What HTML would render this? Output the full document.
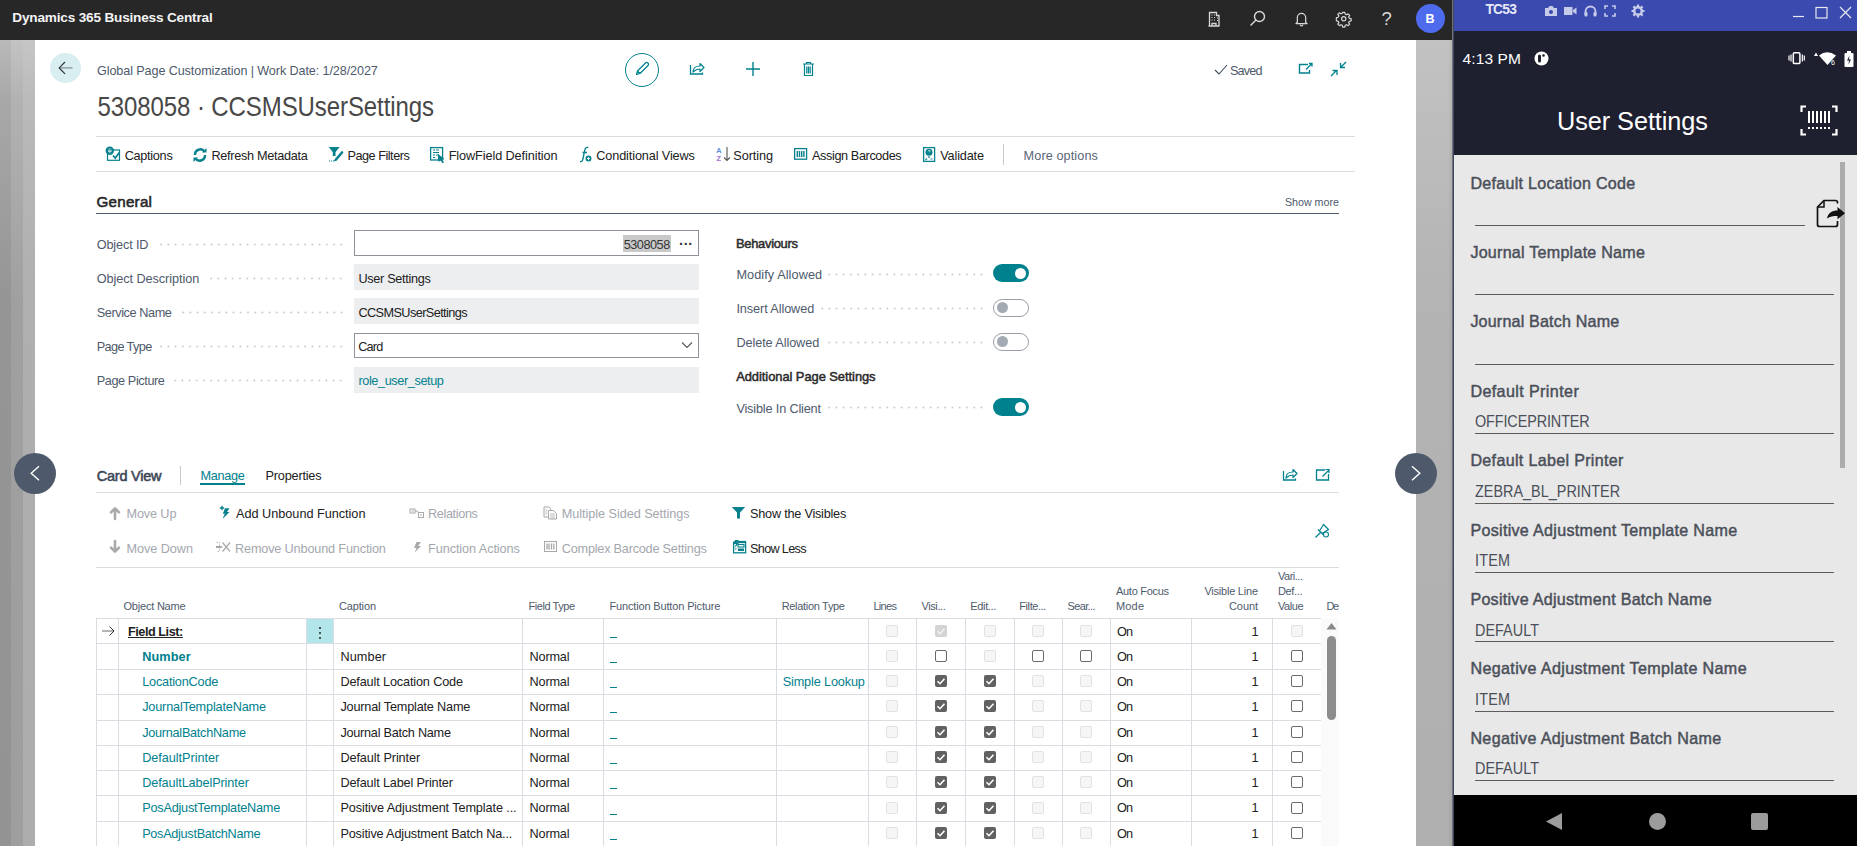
<!DOCTYPE html>
<html><head><meta charset="utf-8">
<style>
*{margin:0;padding:0;box-sizing:border-box}
html,body{width:1857px;height:846px;overflow:hidden;background:#fff;font-family:"Liberation Sans",sans-serif;position:relative}
.a{position:absolute}
.t{position:absolute;white-space:nowrap;line-height:1}
svg.a{overflow:visible}
</style></head><body>
<div class="a" style="left:0px;top:0px;width:1452px;height:40px;background:#272727"></div>
<div class="a" style="left:0px;top:40px;width:11px;height:806px;background:linear-gradient(to bottom,#b9b9b9 0,#a8a8a8 60px,#959595 260px,#939393 100%)"></div>
<div class="a" style="left:11px;top:40px;width:12px;height:806px;background:linear-gradient(to bottom,#c3c3c3 0,#b2b2b2 60px,#a0a0a0 260px,#9e9e9e 100%)"></div>
<div class="a" style="left:23px;top:40px;width:12px;height:806px;background:linear-gradient(to bottom,#c6c6c6 0,#bababa 60px,#afafaf 260px,#adadad 100%)"></div>
<div class="a" style="left:1416px;top:40px;width:36px;height:806px;background:linear-gradient(to bottom,#c2c2c2 0,#b4b4b4 250px,#afafaf 100%)"></div>
<div class="a" style="left:1448px;top:40px;width:4px;height:806px;background:linear-gradient(to right,rgba(0,0,0,0),rgba(0,0,0,.06))"></div>
<div class="t" style="left:12.30px;top:11.09px;font-size:13.6px;color:#f4f4f4;font-weight:bold;letter-spacing:-0.182px;">Dynamics 365 Business Central</div>
<svg class="a" style="left:1207px;top:11px" width="14" height="16" viewBox="0 0 14 16" fill="none"><path d="M2.5 15V1.5h7v3h2.5V15" stroke="#d8d8d8" stroke-width="1.3"/><path d="M4.5 4h1M7 4h1M4.5 6.5h1M7 6.5h1M4.5 9h1M7 9h1M10 7h1M10 9.5h1" stroke="#d8d8d8" stroke-width="1.2"/><path d="M1.5 15h11M5 15v-2.5h4V15" stroke="#d8d8d8" stroke-width="1.3"/></svg>
<svg class="a" style="left:1249px;top:10px" width="17" height="17" viewBox="0 0 17 17" fill="none"><circle cx="10.5" cy="6.5" r="5" stroke="#d8d8d8" stroke-width="1.4"/><path d="M7 10L1.5 15.5" stroke="#d8d8d8" stroke-width="1.5"/></svg>
<svg class="a" style="left:1294.5px;top:11px" width="13" height="15" viewBox="0 0 14 16" fill="none"><path d="M2.5 12V7a4.5 4.5 0 0 1 9 0v5l1.5 1.5H1z" stroke="#d8d8d8" stroke-width="1.3" stroke-linejoin="round"/><path d="M5.5 14.5a1.5 1.5 0 0 0 3 0" stroke="#d8d8d8" stroke-width="1.2"/></svg>
<svg class="a" style="left:1335.5px;top:10.5px" width="15.5" height="15.5" viewBox="0 0 17 17" fill="none"><circle cx="8.5" cy="8.5" r="2.3" stroke="#d8d8d8" stroke-width="1.3"/><path d="M7.3 1.5h2.4l.4 2 1.5.7 1.7-1.1 1.7 1.7-1.1 1.7.7 1.5 2 .4v2.4l-2 .4-.7 1.5 1.1 1.7-1.7 1.7-1.7-1.1-1.5.7-.4 2H7.3l-.4-2-1.5-.7-1.7 1.1-1.7-1.7 1.1-1.7-.7-1.5-2-.4V7.3l2-.4.7-1.5-1.1-1.7 1.7-1.7 1.7 1.1 1.5-.7z" stroke="#d8d8d8" stroke-width="1.3" stroke-linejoin="round"/></svg>
<div class="t" style="left:1381.50px;top:9.94px;font-size:18.5px;color:#d8d8d8;">?</div>
<div class="a" style="left:1416px;top:4px;width:29px;height:29px;background:#4f6bed;border-radius:50%"></div>
<div class="t" style="left:1425.50px;top:13.02px;font-size:12.5px;color:#ffffff;font-weight:bold;">B</div>
<div class="a" style="left:50px;top:52.6px;width:31px;height:30.6px;background:#d8eef1;border-radius:50%"></div>
<svg class="a" style="left:58px;top:61px" width="16" height="14" viewBox="0 0 16 14" fill="none"><path d="M2 6.9h12.5" stroke="#8c9a9a" stroke-width="1.4"/><path d="M7 1L1.2 6.9 7 12.8" stroke="#2f3338" stroke-width="1.2"/></svg>
<div class="t" style="left:97.00px;top:65.13px;font-size:12.6px;color:#4e5a6c;letter-spacing:-0.092px;">Global Page Customization | Work Date: 1/28/2027</div>
<div class="t" style="left:97.50px;top:95.98px;font-size:24px;color:#484848;letter-spacing:-0.090px;transform:scaleY(1.14);transform-origin:0 20.32px;">5308058 · CCSMSUserSettings</div>
<div class="a" style="left:625px;top:53px;width:34px;height:34px;border:1.6px solid #00818e;border-radius:50%"></div>
<svg class="a" style="left:634px;top:61px" width="16" height="16" viewBox="0 0 16 16" fill="none"><path d="M2.5 13.5l1-3.5 8-8a1.4 1.4 0 0 1 2.5 2.5l-8 8z M3.5 10l2.5 2.5" stroke="#00818e" stroke-width="1.2" stroke-linejoin="round"/></svg>
<svg class="a" style="left:689px;top:61px" width="16" height="14" viewBox="0 0 16 14" fill="none"><path d="M1.5 4v9h12v-1.5" stroke="#00818e" stroke-width="1.3"/><path d="M4 11c0-4 3-6 7-6V2.5L15 6.5 11 10.5V8c-3 0-5 1-7 3z" stroke="#00818e" stroke-width="1.2" stroke-linejoin="round"/></svg>
<svg class="a" style="left:745px;top:61px" width="16" height="16" viewBox="0 0 16 16" fill="none"><path d="M8 1v14M1 8h14" stroke="#00818e" stroke-width="1.4"/></svg>
<svg class="a" style="left:802px;top:61px" width="13" height="16" viewBox="0 0 13 16" fill="none"><path d="M1 3h11M4.5 3V1.5h4V3M2.5 3.5v11h8v-11M4.8 5.5v7M6.5 5.5v7M8.2 5.5v7" stroke="#00818e" stroke-width="1.2"/></svg>
<svg class="a" style="left:1214px;top:64px" width="14" height="11" viewBox="0 0 14 11" fill="none"><path d="M1 6l4 4L13 1" stroke="#3f4a5a" stroke-width="1.1"/></svg>
<div class="t" style="left:1230.00px;top:64.93px;font-size:12.6px;color:#4e5a6c;letter-spacing:-0.805px;">Saved</div>
<svg class="a" style="left:1298px;top:62px" width="15" height="13" viewBox="0 0 15 13" fill="none"><path d="M10 2.5H1.5v8.5h10V8" stroke="#00818e" stroke-width="1.4"/><path d="M8 7.5L13.5 2M11 1.5h3v3" stroke="#00818e" stroke-width="1.3"/></svg>
<svg class="a" style="left:1330px;top:61px" width="17" height="16" viewBox="0 0 17 16" fill="none"><path d="M1 15l5.5-5.5M2.5 9.5h4.5v4.5M16 1l-5.5 5.5M10.5 2v4.5H15" stroke="#00818e" stroke-width="1.3"/></svg>
<div class="a" style="left:96px;top:136px;width:1259px;height:1px;background:#d9dbe0"></div>
<div class="a" style="left:96px;top:171px;width:1259px;height:1px;background:#d9dbe0"></div>
<div class="t" style="left:124.70px;top:149.65px;font-size:12.7px;color:#212121;letter-spacing:-0.290px;">Captions</div>
<div class="t" style="left:211.50px;top:149.65px;font-size:12.7px;color:#212121;letter-spacing:-0.298px;">Refresh Metadata</div>
<div class="t" style="left:347.40px;top:149.65px;font-size:12.7px;color:#212121;letter-spacing:-0.478px;">Page Filters</div>
<div class="t" style="left:448.70px;top:149.65px;font-size:12.7px;color:#212121;letter-spacing:-0.096px;">FlowField Definition</div>
<div class="t" style="left:596.30px;top:149.65px;font-size:12.7px;color:#212121;letter-spacing:-0.126px;">Conditional Views</div>
<div class="t" style="left:733.30px;top:149.65px;font-size:12.7px;color:#212121;letter-spacing:-0.072px;">Sorting</div>
<div class="t" style="left:812.00px;top:149.65px;font-size:12.7px;color:#212121;letter-spacing:-0.393px;">Assign Barcodes</div>
<div class="t" style="left:940.20px;top:149.65px;font-size:12.7px;color:#212121;letter-spacing:-0.151px;">Validate</div>
<div class="a" style="left:1003px;top:144px;width:1px;height:21px;background:#c8cbd0"></div>
<div class="t" style="left:1023.60px;top:149.65px;font-size:12.7px;color:#5a6578;letter-spacing:0.089px;">More options</div>
<div class="t" style="left:96.50px;top:193.93px;font-size:15.2px;color:#262626;letter-spacing:0.236px;-webkit-text-stroke:0.55px #262626;">General</div>
<div class="a" style="left:96px;top:213px;width:1243px;height:1px;background:#4f5b6c"></div>
<div class="t" style="left:1284.88px;top:196.54px;font-size:10.7px;color:#4e5a6c;">Show more</div>
<div class="t" style="left:96.70px;top:238.85px;font-size:12.7px;color:#4e5a6c;letter-spacing:-0.129px;">Object ID</div>
<div class="t" style="left:96.70px;top:272.85px;font-size:12.7px;color:#4e5a6c;letter-spacing:-0.068px;">Object Description</div>
<div class="t" style="left:96.70px;top:306.85px;font-size:12.7px;color:#4e5a6c;letter-spacing:-0.405px;">Service Name</div>
<div class="t" style="left:96.70px;top:340.85px;font-size:12.7px;color:#4e5a6c;letter-spacing:-0.611px;">Page Type</div>
<div class="t" style="left:96.70px;top:374.85px;font-size:12.7px;color:#4e5a6c;letter-spacing:-0.402px;">Page Picture</div>
<svg class="a" style="left:159.90px;top:242.90px" width="185.3" height="3"><defs><pattern id="dp1" x="0" y="0" width="7.2" height="3" patternUnits="userSpaceOnUse"><circle cx="1.2" cy="1.5" r="0.95" fill="#c3c7cd"/></pattern></defs><rect width="185.3" height="3" fill="url(#dp1)"/></svg>
<svg class="a" style="left:210.30px;top:276.90px" width="134.9" height="3"><defs><pattern id="dp2" x="0" y="0" width="7.2" height="3" patternUnits="userSpaceOnUse"><circle cx="1.2" cy="1.5" r="0.95" fill="#c3c7cd"/></pattern></defs><rect width="134.9" height="3" fill="url(#dp2)"/></svg>
<svg class="a" style="left:181.50px;top:310.90px" width="163.7" height="3"><defs><pattern id="dp3" x="0" y="0" width="7.2" height="3" patternUnits="userSpaceOnUse"><circle cx="1.2" cy="1.5" r="0.95" fill="#c3c7cd"/></pattern></defs><rect width="163.7" height="3" fill="url(#dp3)"/></svg>
<svg class="a" style="left:159.90px;top:344.90px" width="185.3" height="3"><defs><pattern id="dp4" x="0" y="0" width="7.2" height="3" patternUnits="userSpaceOnUse"><circle cx="1.2" cy="1.5" r="0.95" fill="#c3c7cd"/></pattern></defs><rect width="185.3" height="3" fill="url(#dp4)"/></svg>
<svg class="a" style="left:174.30px;top:378.90px" width="170.9" height="3"><defs><pattern id="dp5" x="0" y="0" width="7.2" height="3" patternUnits="userSpaceOnUse"><circle cx="1.2" cy="1.5" r="0.95" fill="#c3c7cd"/></pattern></defs><rect width="170.9" height="3" fill="url(#dp5)"/></svg>
<div class="a" style="left:354px;top:230px;width:345px;height:26px;border:1px solid #8c919a;background:#fff"></div>
<div class="a" style="left:623px;top:235px;width:48px;height:16.5px;background:#c9c9c9"></div>
<div class="t" style="left:623.70px;top:238.85px;font-size:12.7px;color:#333;letter-spacing:-0.474px;">5308058</div>
<div class="t" style="left:679.00px;top:236.95px;font-size:14px;color:#333;font-weight:bold;">···</div>
<div class="a" style="left:354px;top:264px;width:345px;height:26px;background:#edeef0"></div>
<div class="t" style="left:358.40px;top:272.85px;font-size:12.7px;color:#212121;letter-spacing:-0.302px;">User Settings</div>
<div class="a" style="left:354px;top:298px;width:345px;height:26px;background:#edeef0"></div>
<div class="t" style="left:358.40px;top:306.85px;font-size:12.7px;color:#212121;letter-spacing:-0.579px;">CCSMSUserSettings</div>
<div class="a" style="left:354px;top:333px;width:345px;height:25px;border:1px solid #8c919a;background:#fff"></div>
<div class="t" style="left:358.20px;top:340.85px;font-size:12.7px;color:#212121;letter-spacing:-0.811px;">Card</div>
<svg class="a" style="left:681px;top:341px" width="12" height="8" viewBox="0 0 12 8" fill="none"><path d="M1 1.5l5 5 5-5" stroke="#555" stroke-width="1.1"/></svg>
<div class="a" style="left:354px;top:367px;width:345px;height:26px;background:#edeef0"></div>
<div class="t" style="left:358.40px;top:374.85px;font-size:12.7px;color:#00818e;letter-spacing:-0.391px;">role_user_setup</div>
<div class="t" style="left:736.00px;top:238.18px;font-size:12.9px;color:#2b2b2b;letter-spacing:-0.282px;-webkit-text-stroke:0.5px #2b2b2b;">Behaviours</div>
<div class="t" style="left:736.40px;top:269.35px;font-size:12.7px;color:#4e5a6c;letter-spacing:0.084px;">Modify Allowed</div>
<div class="t" style="left:736.40px;top:303.35px;font-size:12.7px;color:#4e5a6c;letter-spacing:-0.090px;">Insert Allowed</div>
<div class="t" style="left:736.40px;top:337.15px;font-size:12.7px;color:#4e5a6c;letter-spacing:-0.085px;">Delete Allowed</div>
<div class="t" style="left:736.20px;top:370.98px;font-size:12.9px;color:#2b2b2b;letter-spacing:-0.047px;-webkit-text-stroke:0.5px #2b2b2b;">Additional Page Settings</div>
<div class="t" style="left:736.40px;top:402.85px;font-size:12.7px;color:#4e5a6c;letter-spacing:-0.162px;">Visible In Client</div>
<svg class="a" style="left:827.80px;top:272.80px" width="155.4" height="3"><defs><pattern id="dp6" x="0" y="0" width="7.25" height="3" patternUnits="userSpaceOnUse"><circle cx="1.2" cy="1.5" r="0.95" fill="#c3c7cd"/></pattern></defs><rect width="155.4" height="3" fill="url(#dp6)"/></svg>
<svg class="a" style="left:820.55px;top:306.80px" width="162.7" height="3"><defs><pattern id="dp7" x="0" y="0" width="7.25" height="3" patternUnits="userSpaceOnUse"><circle cx="1.2" cy="1.5" r="0.95" fill="#c3c7cd"/></pattern></defs><rect width="162.7" height="3" fill="url(#dp7)"/></svg>
<svg class="a" style="left:827.80px;top:340.60px" width="155.4" height="3"><defs><pattern id="dp8" x="0" y="0" width="7.25" height="3" patternUnits="userSpaceOnUse"><circle cx="1.2" cy="1.5" r="0.95" fill="#c3c7cd"/></pattern></defs><rect width="155.4" height="3" fill="url(#dp8)"/></svg>
<svg class="a" style="left:827.80px;top:406.30px" width="155.4" height="3"><defs><pattern id="dp9" x="0" y="0" width="7.25" height="3" patternUnits="userSpaceOnUse"><circle cx="1.2" cy="1.5" r="0.95" fill="#c3c7cd"/></pattern></defs><rect width="155.4" height="3" fill="url(#dp9)"/></svg>
<div class="a" style="left:993px;top:264px;width:36px;height:18px;background:#00818e;border-radius:9px"></div>
<div class="a" style="left:1015px;top:267.8px;width:11px;height:11px;background:#fff;border-radius:50%"></div>
<div class="a" style="left:993px;top:299px;width:36px;height:18px;background:#fff;border:1px solid #9aa0a8;border-radius:9px"></div>
<div class="a" style="left:997px;top:302.2px;width:11px;height:11px;background:#a4aab4;border-radius:50%"></div>
<div class="a" style="left:993px;top:333px;width:36px;height:18px;background:#fff;border:1px solid #9aa0a8;border-radius:9px"></div>
<div class="a" style="left:997px;top:336.2px;width:11px;height:11px;background:#a4aab4;border-radius:50%"></div>
<div class="a" style="left:993px;top:398px;width:36px;height:18px;background:#00818e;border-radius:9px"></div>
<div class="a" style="left:1015px;top:401.8px;width:11px;height:11px;background:#fff;border-radius:50%"></div>
<div class="a" style="left:14px;top:452.6px;width:42px;height:41.4px;background:#4e5a6c;border-radius:50%"></div>
<svg class="a" style="left:29px;top:465px" width="12" height="16" viewBox="0 0 12 16" fill="none"><path d="M10 1.2L2.2 8.2l7.8 7" stroke="#fff" stroke-width="1.4"/></svg>
<div class="a" style="left:1395px;top:452.6px;width:42px;height:41.4px;background:#4e5a6c;border-radius:50%"></div>
<svg class="a" style="left:1410px;top:465px" width="12" height="16" viewBox="0 0 12 16" fill="none"><path d="M2 1.2l7.8 7L2 15.2" stroke="#fff" stroke-width="1.4"/></svg>
<div class="t" style="left:96.80px;top:468.63px;font-size:14.5px;color:#3d4756;letter-spacing:-0.234px;-webkit-text-stroke:0.55px #3d4756;">Card View</div>
<div class="a" style="left:180px;top:466px;width:1px;height:19px;background:#c8cbd0"></div>
<div class="t" style="left:200.40px;top:469.65px;font-size:12.7px;color:#00818e;letter-spacing:-0.280px;">Manage</div>
<div class="a" style="left:200px;top:482.5px;width:45px;height:2px;background:#00818e"></div>
<div class="t" style="left:265.60px;top:469.65px;font-size:12.7px;color:#212121;letter-spacing:-0.210px;">Properties</div>
<div class="a" style="left:96px;top:492px;width:1243px;height:1px;background:#d9dbe0"></div>
<svg class="a" style="left:1282px;top:467px" width="15" height="14" viewBox="0 0 15 14" fill="none"><path d="M1.5 4v9h12v-1.5" stroke="#00818e" stroke-width="1.3"/><path d="M4 11c0-4 3-6 7-6V2.5L15 6.5 11 10.5V8c-3 0-5 1-7 3z" stroke="#00818e" stroke-width="1.2" stroke-linejoin="round"/></svg>
<svg class="a" style="left:1315px;top:468px" width="15" height="13" viewBox="0 0 15 13" fill="none"><path d="M10 2H1.5v10h12V6" stroke="#00818e" stroke-width="1.3"/><path d="M7.5 8.5L13.5 2.5M10.5 1.5h3.5v3.5" stroke="#00818e" stroke-width="1.2"/></svg>
<div class="t" style="left:126.50px;top:508.15px;font-size:12.7px;color:#a3a7ae;letter-spacing:-0.135px;">Move Up</div>
<div class="t" style="left:236.10px;top:508.15px;font-size:12.7px;color:#212121;letter-spacing:-0.022px;">Add Unbound Function</div>
<div class="t" style="left:428.00px;top:508.15px;font-size:12.7px;color:#a3a7ae;letter-spacing:-0.368px;">Relations</div>
<div class="t" style="left:561.80px;top:508.15px;font-size:12.7px;color:#a3a7ae;letter-spacing:-0.054px;">Multiple Sided Settings</div>
<div class="t" style="left:750.00px;top:508.15px;font-size:12.7px;color:#212121;letter-spacing:-0.226px;">Show the Visibles</div>
<div class="t" style="left:126.50px;top:542.65px;font-size:12.7px;color:#a3a7ae;letter-spacing:-0.069px;">Move Down</div>
<div class="t" style="left:235.00px;top:542.65px;font-size:12.7px;color:#a3a7ae;letter-spacing:-0.164px;">Remove Unbound Function</div>
<div class="t" style="left:428.00px;top:542.65px;font-size:12.7px;color:#a3a7ae;letter-spacing:-0.079px;">Function Actions</div>
<div class="t" style="left:561.80px;top:542.65px;font-size:12.7px;color:#a3a7ae;letter-spacing:-0.224px;">Complex Barcode Settings</div>
<div class="t" style="left:750.00px;top:542.65px;font-size:12.7px;color:#212121;letter-spacing:-0.679px;">Show Less</div>
<div class="a" style="left:96px;top:567px;width:1243px;height:1px;background:#d9dbe0"></div>
<div class="t" style="left:123.50px;top:600.79px;font-size:11px;color:#4e5a6c;letter-spacing:-0.209px;">Object Name</div>
<div class="t" style="left:339.00px;top:600.79px;font-size:11px;color:#4e5a6c;letter-spacing:-0.153px;">Caption</div>
<div class="t" style="left:528.50px;top:600.79px;font-size:11px;color:#4e5a6c;letter-spacing:-0.449px;">Field Type</div>
<div class="t" style="left:609.40px;top:600.79px;font-size:11px;color:#4e5a6c;letter-spacing:-0.148px;">Function Button Picture</div>
<div class="t" style="left:781.70px;top:600.79px;font-size:11px;color:#4e5a6c;letter-spacing:-0.314px;">Relation Type</div>
<div class="t" style="left:873.40px;top:600.79px;font-size:11px;color:#4e5a6c;letter-spacing:-0.675px;">Lines</div>
<div class="t" style="left:921.40px;top:600.79px;font-size:11px;color:#4e5a6c;letter-spacing:-0.383px;">Visi...</div>
<div class="t" style="left:970.30px;top:600.79px;font-size:11px;color:#4e5a6c;letter-spacing:-0.354px;">Edit...</div>
<div class="t" style="left:1019.30px;top:600.79px;font-size:11px;color:#4e5a6c;letter-spacing:-0.422px;">Filte...</div>
<div class="t" style="left:1067.60px;top:600.79px;font-size:11px;color:#4e5a6c;letter-spacing:-0.667px;">Sear...</div>
<div class="t" style="left:1116.00px;top:585.79px;font-size:11px;color:#4e5a6c;letter-spacing:-0.293px;">Auto Focus</div>
<div class="t" style="left:1116.00px;top:600.79px;font-size:11px;color:#4e5a6c;letter-spacing:0.163px;">Mode</div>
<div class="t" style="left:1204.40px;top:585.79px;font-size:11px;color:#4e5a6c;letter-spacing:-0.223px;">Visible Line</div>
<div class="t" style="left:1229.00px;top:600.79px;font-size:11px;color:#4e5a6c;letter-spacing:-0.087px;">Count</div>
<div class="t" style="left:1278.00px;top:570.79px;font-size:11px;color:#4e5a6c;letter-spacing:-0.486px;">Vari...</div>
<div class="t" style="left:1278.00px;top:585.79px;font-size:11px;color:#4e5a6c;letter-spacing:-0.358px;">Def...</div>
<div class="t" style="left:1278.00px;top:600.79px;font-size:11px;color:#4e5a6c;letter-spacing:-0.453px;">Value</div>
<div class="t" style="left:1326.50px;top:600.79px;font-size:11px;color:#4e5a6c;letter-spacing:-1.558px;">De</div>
<div class="a" style="left:96px;top:618px;width:1225px;height:1px;background:#dcdde2"></div>
<div class="a" style="left:96px;top:643px;width:1225px;height:1px;background:#dcdde2"></div>
<div class="a" style="left:96px;top:669px;width:1225px;height:1px;background:#dcdde2"></div>
<div class="a" style="left:96px;top:694px;width:1225px;height:1px;background:#dcdde2"></div>
<div class="a" style="left:96px;top:720px;width:1225px;height:1px;background:#dcdde2"></div>
<div class="a" style="left:96px;top:745px;width:1225px;height:1px;background:#dcdde2"></div>
<div class="a" style="left:96px;top:770px;width:1225px;height:1px;background:#dcdde2"></div>
<div class="a" style="left:96px;top:795px;width:1225px;height:1px;background:#dcdde2"></div>
<div class="a" style="left:96px;top:821px;width:1225px;height:1px;background:#dcdde2"></div>
<div class="a" style="left:96px;top:846px;width:1225px;height:1px;background:#dcdde2"></div>
<div class="a" style="left:96px;top:618px;width:1px;height:228px;background:#dcdde2"></div>
<div class="a" style="left:118px;top:618px;width:1px;height:228px;background:#dcdde2"></div>
<div class="a" style="left:306px;top:618px;width:1px;height:228px;background:#dcdde2"></div>
<div class="a" style="left:333px;top:618px;width:1px;height:228px;background:#dcdde2"></div>
<div class="a" style="left:522px;top:618px;width:1px;height:228px;background:#dcdde2"></div>
<div class="a" style="left:603px;top:618px;width:1px;height:228px;background:#dcdde2"></div>
<div class="a" style="left:776px;top:618px;width:1px;height:228px;background:#dcdde2"></div>
<div class="a" style="left:868px;top:618px;width:1px;height:228px;background:#dcdde2"></div>
<div class="a" style="left:916px;top:618px;width:1px;height:228px;background:#dcdde2"></div>
<div class="a" style="left:965px;top:618px;width:1px;height:228px;background:#dcdde2"></div>
<div class="a" style="left:1014px;top:618px;width:1px;height:228px;background:#dcdde2"></div>
<div class="a" style="left:1062px;top:618px;width:1px;height:228px;background:#dcdde2"></div>
<div class="a" style="left:1110px;top:618px;width:1px;height:228px;background:#dcdde2"></div>
<div class="a" style="left:1191px;top:618px;width:1px;height:228px;background:#dcdde2"></div>
<div class="a" style="left:1272px;top:618px;width:1px;height:228px;background:#dcdde2"></div>
<div class="a" style="left:1321px;top:618px;width:1px;height:228px;background:#dcdde2"></div>
<div class="a" style="left:306.5px;top:619px;width:26.5px;height:24px;background:#b3e6eb"></div>
<div class="a" style="left:319.2px;top:626.5px;width:2px;height:2px;background:#222;border-radius:50%"></div>
<div class="a" style="left:319.2px;top:631.8px;width:2px;height:2px;background:#222;border-radius:50%"></div>
<div class="a" style="left:319.2px;top:637.0px;width:2px;height:2px;background:#222;border-radius:50%"></div>
<svg class="a" style="left:101px;top:625px" width="15" height="12" viewBox="0 0 15 12" fill="none"><path d="M1 6h12" stroke="#777" stroke-width="1.1"/><path d="M8.5 1.5L13 6l-4.5 4.5" stroke="#333" stroke-width="1"/></svg>
<div class="t" style="left:128.00px;top:625.85px;font-size:12.7px;color:#212121;font-weight:bold;letter-spacing:-0.467px;text-decoration:underline;">Field List:</div>
<div class="a" style="left:609.5px;top:637px;width:7px;height:1.3px;background:#00818e"></div>
<div class="a" style="left:886px;top:625px;width:12px;height:12px;background:#f6f6f6;border:1px solid #e2e2e4;border-radius:2px"></div>
<div class="a" style="left:935px;top:625px;width:12px;height:12px;background:#d4d4d4;border-radius:2px"></div>
<svg class="a" style="left:935px;top:625px" width="12" height="12" viewBox="0 0 12 12" fill="none"><path d="M2.5 6.2l2.5 2.5 4.5-5" stroke="#f2f2f2" stroke-width="1.5"/></svg>
<div class="a" style="left:983.5px;top:625px;width:12px;height:12px;background:#f6f6f6;border:1px solid #e2e2e4;border-radius:2px"></div>
<div class="a" style="left:1032px;top:625px;width:12px;height:12px;background:#f6f6f6;border:1px solid #e2e2e4;border-radius:2px"></div>
<div class="a" style="left:1080px;top:625px;width:12px;height:12px;background:#f6f6f6;border:1px solid #e2e2e4;border-radius:2px"></div>
<div class="t" style="left:1117.00px;top:625.85px;font-size:12.7px;color:#212121;letter-spacing:-0.942px;">On</div>
<div class="t" style="left:1251.44px;top:625.85px;font-size:12.7px;color:#212121;">1</div>
<div class="a" style="left:1291px;top:625px;width:12px;height:12px;background:#f6f6f6;border:1px solid #e2e2e4;border-radius:2px"></div>
<div class="t" style="left:142.20px;top:651.06px;font-size:12.7px;color:#00818e;font-weight:bold;letter-spacing:0.104px;">Number</div>
<div class="t" style="left:340.40px;top:651.06px;font-size:12.7px;color:#212121;letter-spacing:0.105px;">Number</div>
<div class="t" style="left:529.50px;top:651.06px;font-size:12.7px;color:#212121;letter-spacing:-0.166px;">Normal</div>
<div class="a" style="left:609.5px;top:662px;width:7px;height:1.3px;background:#00818e"></div>
<div class="a" style="left:886px;top:650px;width:12px;height:12px;background:#f6f6f6;border:1px solid #e2e2e4;border-radius:2px"></div>
<div class="a" style="left:935px;top:650px;width:12px;height:12px;background:#fff;border:1px solid #6b6b6b;border-radius:2px"></div>
<div class="a" style="left:983.5px;top:650px;width:12px;height:12px;background:#f6f6f6;border:1px solid #e2e2e4;border-radius:2px"></div>
<div class="a" style="left:1032px;top:650px;width:12px;height:12px;background:#fff;border:1px solid #6b6b6b;border-radius:2px"></div>
<div class="a" style="left:1080px;top:650px;width:12px;height:12px;background:#fff;border:1px solid #6b6b6b;border-radius:2px"></div>
<div class="t" style="left:1117.00px;top:651.06px;font-size:12.7px;color:#212121;letter-spacing:-0.942px;">On</div>
<div class="t" style="left:1251.44px;top:651.06px;font-size:12.7px;color:#212121;">1</div>
<div class="a" style="left:1291px;top:650px;width:12px;height:12px;background:#fff;border:1px solid #6b6b6b;border-radius:2px"></div>
<div class="t" style="left:142.20px;top:676.27px;font-size:12.7px;color:#00818e;letter-spacing:-0.197px;">LocationCode</div>
<div class="t" style="left:340.40px;top:676.27px;font-size:12.7px;color:#212121;letter-spacing:-0.144px;">Default Location Code</div>
<div class="t" style="left:529.50px;top:676.27px;font-size:12.7px;color:#212121;letter-spacing:-0.166px;">Normal</div>
<div class="a" style="left:609.5px;top:687px;width:7px;height:1.3px;background:#00818e"></div>
<div class="t" style="left:782.70px;top:676.27px;font-size:12.7px;color:#00818e;letter-spacing:-0.143px;">Simple Lookup</div>
<div class="a" style="left:886px;top:675px;width:12px;height:12px;background:#f6f6f6;border:1px solid #e2e2e4;border-radius:2px"></div>
<div class="a" style="left:935px;top:675px;width:12px;height:12px;background:#616161;border-radius:2px"></div>
<svg class="a" style="left:935px;top:675px" width="12" height="12" viewBox="0 0 12 12" fill="none"><path d="M2.5 6.2l2.5 2.5 4.5-5" stroke="#fff" stroke-width="1.6"/></svg>
<div class="a" style="left:983.5px;top:675px;width:12px;height:12px;background:#616161;border-radius:2px"></div>
<svg class="a" style="left:983.5px;top:675px" width="12" height="12" viewBox="0 0 12 12" fill="none"><path d="M2.5 6.2l2.5 2.5 4.5-5" stroke="#fff" stroke-width="1.6"/></svg>
<div class="a" style="left:1032px;top:675px;width:12px;height:12px;background:#f6f6f6;border:1px solid #e2e2e4;border-radius:2px"></div>
<div class="a" style="left:1080px;top:675px;width:12px;height:12px;background:#f6f6f6;border:1px solid #e2e2e4;border-radius:2px"></div>
<div class="t" style="left:1117.00px;top:676.27px;font-size:12.7px;color:#212121;letter-spacing:-0.942px;">On</div>
<div class="t" style="left:1251.44px;top:676.27px;font-size:12.7px;color:#212121;">1</div>
<div class="a" style="left:1291px;top:675px;width:12px;height:12px;background:#fff;border:1px solid #6b6b6b;border-radius:2px"></div>
<div class="t" style="left:142.20px;top:701.48px;font-size:12.7px;color:#00818e;letter-spacing:-0.176px;">JournalTemplateName</div>
<div class="t" style="left:340.40px;top:701.48px;font-size:12.7px;color:#212121;letter-spacing:-0.190px;">Journal Template Name</div>
<div class="t" style="left:529.50px;top:701.48px;font-size:12.7px;color:#212121;letter-spacing:-0.166px;">Normal</div>
<div class="a" style="left:609.5px;top:712px;width:7px;height:1.3px;background:#00818e"></div>
<div class="a" style="left:886px;top:700px;width:12px;height:12px;background:#f6f6f6;border:1px solid #e2e2e4;border-radius:2px"></div>
<div class="a" style="left:935px;top:700px;width:12px;height:12px;background:#616161;border-radius:2px"></div>
<svg class="a" style="left:935px;top:700px" width="12" height="12" viewBox="0 0 12 12" fill="none"><path d="M2.5 6.2l2.5 2.5 4.5-5" stroke="#fff" stroke-width="1.6"/></svg>
<div class="a" style="left:983.5px;top:700px;width:12px;height:12px;background:#616161;border-radius:2px"></div>
<svg class="a" style="left:983.5px;top:700px" width="12" height="12" viewBox="0 0 12 12" fill="none"><path d="M2.5 6.2l2.5 2.5 4.5-5" stroke="#fff" stroke-width="1.6"/></svg>
<div class="a" style="left:1032px;top:700px;width:12px;height:12px;background:#f6f6f6;border:1px solid #e2e2e4;border-radius:2px"></div>
<div class="a" style="left:1080px;top:700px;width:12px;height:12px;background:#f6f6f6;border:1px solid #e2e2e4;border-radius:2px"></div>
<div class="t" style="left:1117.00px;top:701.48px;font-size:12.7px;color:#212121;letter-spacing:-0.942px;">On</div>
<div class="t" style="left:1251.44px;top:701.48px;font-size:12.7px;color:#212121;">1</div>
<div class="a" style="left:1291px;top:700px;width:12px;height:12px;background:#fff;border:1px solid #6b6b6b;border-radius:2px"></div>
<div class="t" style="left:142.20px;top:726.69px;font-size:12.7px;color:#00818e;letter-spacing:-0.273px;">JournalBatchName</div>
<div class="t" style="left:340.40px;top:726.69px;font-size:12.7px;color:#212121;letter-spacing:-0.257px;">Journal Batch Name</div>
<div class="t" style="left:529.50px;top:726.69px;font-size:12.7px;color:#212121;letter-spacing:-0.166px;">Normal</div>
<div class="a" style="left:609.5px;top:738px;width:7px;height:1.3px;background:#00818e"></div>
<div class="a" style="left:886px;top:726px;width:12px;height:12px;background:#f6f6f6;border:1px solid #e2e2e4;border-radius:2px"></div>
<div class="a" style="left:935px;top:726px;width:12px;height:12px;background:#616161;border-radius:2px"></div>
<svg class="a" style="left:935px;top:726px" width="12" height="12" viewBox="0 0 12 12" fill="none"><path d="M2.5 6.2l2.5 2.5 4.5-5" stroke="#fff" stroke-width="1.6"/></svg>
<div class="a" style="left:983.5px;top:726px;width:12px;height:12px;background:#616161;border-radius:2px"></div>
<svg class="a" style="left:983.5px;top:726px" width="12" height="12" viewBox="0 0 12 12" fill="none"><path d="M2.5 6.2l2.5 2.5 4.5-5" stroke="#fff" stroke-width="1.6"/></svg>
<div class="a" style="left:1032px;top:726px;width:12px;height:12px;background:#f6f6f6;border:1px solid #e2e2e4;border-radius:2px"></div>
<div class="a" style="left:1080px;top:726px;width:12px;height:12px;background:#f6f6f6;border:1px solid #e2e2e4;border-radius:2px"></div>
<div class="t" style="left:1117.00px;top:726.69px;font-size:12.7px;color:#212121;letter-spacing:-0.942px;">On</div>
<div class="t" style="left:1251.44px;top:726.69px;font-size:12.7px;color:#212121;">1</div>
<div class="a" style="left:1291px;top:726px;width:12px;height:12px;background:#fff;border:1px solid #6b6b6b;border-radius:2px"></div>
<div class="t" style="left:142.20px;top:751.90px;font-size:12.7px;color:#00818e;letter-spacing:-0.042px;">DefaultPrinter</div>
<div class="t" style="left:340.40px;top:751.90px;font-size:12.7px;color:#212121;letter-spacing:-0.091px;">Default Printer</div>
<div class="t" style="left:529.50px;top:751.90px;font-size:12.7px;color:#212121;letter-spacing:-0.166px;">Normal</div>
<div class="a" style="left:609.5px;top:763px;width:7px;height:1.3px;background:#00818e"></div>
<div class="a" style="left:886px;top:751px;width:12px;height:12px;background:#f6f6f6;border:1px solid #e2e2e4;border-radius:2px"></div>
<div class="a" style="left:935px;top:751px;width:12px;height:12px;background:#616161;border-radius:2px"></div>
<svg class="a" style="left:935px;top:751px" width="12" height="12" viewBox="0 0 12 12" fill="none"><path d="M2.5 6.2l2.5 2.5 4.5-5" stroke="#fff" stroke-width="1.6"/></svg>
<div class="a" style="left:983.5px;top:751px;width:12px;height:12px;background:#616161;border-radius:2px"></div>
<svg class="a" style="left:983.5px;top:751px" width="12" height="12" viewBox="0 0 12 12" fill="none"><path d="M2.5 6.2l2.5 2.5 4.5-5" stroke="#fff" stroke-width="1.6"/></svg>
<div class="a" style="left:1032px;top:751px;width:12px;height:12px;background:#f6f6f6;border:1px solid #e2e2e4;border-radius:2px"></div>
<div class="a" style="left:1080px;top:751px;width:12px;height:12px;background:#f6f6f6;border:1px solid #e2e2e4;border-radius:2px"></div>
<div class="t" style="left:1117.00px;top:751.90px;font-size:12.7px;color:#212121;letter-spacing:-0.942px;">On</div>
<div class="t" style="left:1251.44px;top:751.90px;font-size:12.7px;color:#212121;">1</div>
<div class="a" style="left:1291px;top:751px;width:12px;height:12px;background:#fff;border:1px solid #6b6b6b;border-radius:2px"></div>
<div class="t" style="left:142.20px;top:777.11px;font-size:12.7px;color:#00818e;letter-spacing:-0.107px;">DefaultLabelPrinter</div>
<div class="t" style="left:340.40px;top:777.11px;font-size:12.7px;color:#212121;letter-spacing:-0.154px;">Default Label Printer</div>
<div class="t" style="left:529.50px;top:777.11px;font-size:12.7px;color:#212121;letter-spacing:-0.166px;">Normal</div>
<div class="a" style="left:609.5px;top:788px;width:7px;height:1.3px;background:#00818e"></div>
<div class="a" style="left:886px;top:776px;width:12px;height:12px;background:#f6f6f6;border:1px solid #e2e2e4;border-radius:2px"></div>
<div class="a" style="left:935px;top:776px;width:12px;height:12px;background:#616161;border-radius:2px"></div>
<svg class="a" style="left:935px;top:776px" width="12" height="12" viewBox="0 0 12 12" fill="none"><path d="M2.5 6.2l2.5 2.5 4.5-5" stroke="#fff" stroke-width="1.6"/></svg>
<div class="a" style="left:983.5px;top:776px;width:12px;height:12px;background:#616161;border-radius:2px"></div>
<svg class="a" style="left:983.5px;top:776px" width="12" height="12" viewBox="0 0 12 12" fill="none"><path d="M2.5 6.2l2.5 2.5 4.5-5" stroke="#fff" stroke-width="1.6"/></svg>
<div class="a" style="left:1032px;top:776px;width:12px;height:12px;background:#f6f6f6;border:1px solid #e2e2e4;border-radius:2px"></div>
<div class="a" style="left:1080px;top:776px;width:12px;height:12px;background:#f6f6f6;border:1px solid #e2e2e4;border-radius:2px"></div>
<div class="t" style="left:1117.00px;top:777.11px;font-size:12.7px;color:#212121;letter-spacing:-0.942px;">On</div>
<div class="t" style="left:1251.44px;top:777.11px;font-size:12.7px;color:#212121;">1</div>
<div class="a" style="left:1291px;top:776px;width:12px;height:12px;background:#fff;border:1px solid #6b6b6b;border-radius:2px"></div>
<div class="t" style="left:142.20px;top:802.32px;font-size:12.7px;color:#00818e;letter-spacing:-0.220px;">PosAdjustTemplateName</div>
<div class="t" style="left:340.40px;top:802.32px;font-size:12.7px;color:#212121;letter-spacing:-0.109px;">Positive Adjustment Template ...</div>
<div class="t" style="left:529.50px;top:802.32px;font-size:12.7px;color:#212121;letter-spacing:-0.166px;">Normal</div>
<div class="a" style="left:609.5px;top:814px;width:7px;height:1.3px;background:#00818e"></div>
<div class="a" style="left:886px;top:802px;width:12px;height:12px;background:#f6f6f6;border:1px solid #e2e2e4;border-radius:2px"></div>
<div class="a" style="left:935px;top:802px;width:12px;height:12px;background:#616161;border-radius:2px"></div>
<svg class="a" style="left:935px;top:802px" width="12" height="12" viewBox="0 0 12 12" fill="none"><path d="M2.5 6.2l2.5 2.5 4.5-5" stroke="#fff" stroke-width="1.6"/></svg>
<div class="a" style="left:983.5px;top:802px;width:12px;height:12px;background:#616161;border-radius:2px"></div>
<svg class="a" style="left:983.5px;top:802px" width="12" height="12" viewBox="0 0 12 12" fill="none"><path d="M2.5 6.2l2.5 2.5 4.5-5" stroke="#fff" stroke-width="1.6"/></svg>
<div class="a" style="left:1032px;top:802px;width:12px;height:12px;background:#f6f6f6;border:1px solid #e2e2e4;border-radius:2px"></div>
<div class="a" style="left:1080px;top:802px;width:12px;height:12px;background:#f6f6f6;border:1px solid #e2e2e4;border-radius:2px"></div>
<div class="t" style="left:1117.00px;top:802.32px;font-size:12.7px;color:#212121;letter-spacing:-0.942px;">On</div>
<div class="t" style="left:1251.44px;top:802.32px;font-size:12.7px;color:#212121;">1</div>
<div class="a" style="left:1291px;top:802px;width:12px;height:12px;background:#fff;border:1px solid #6b6b6b;border-radius:2px"></div>
<div class="t" style="left:142.20px;top:827.53px;font-size:12.7px;color:#00818e;letter-spacing:-0.296px;">PosAdjustBatchName</div>
<div class="t" style="left:340.40px;top:827.53px;font-size:12.7px;color:#212121;letter-spacing:-0.169px;">Positive Adjustment Batch Na...</div>
<div class="t" style="left:529.50px;top:827.53px;font-size:12.7px;color:#212121;letter-spacing:-0.166px;">Normal</div>
<div class="a" style="left:609.5px;top:839px;width:7px;height:1.3px;background:#00818e"></div>
<div class="a" style="left:886px;top:827px;width:12px;height:12px;background:#f6f6f6;border:1px solid #e2e2e4;border-radius:2px"></div>
<div class="a" style="left:935px;top:827px;width:12px;height:12px;background:#616161;border-radius:2px"></div>
<svg class="a" style="left:935px;top:827px" width="12" height="12" viewBox="0 0 12 12" fill="none"><path d="M2.5 6.2l2.5 2.5 4.5-5" stroke="#fff" stroke-width="1.6"/></svg>
<div class="a" style="left:983.5px;top:827px;width:12px;height:12px;background:#616161;border-radius:2px"></div>
<svg class="a" style="left:983.5px;top:827px" width="12" height="12" viewBox="0 0 12 12" fill="none"><path d="M2.5 6.2l2.5 2.5 4.5-5" stroke="#fff" stroke-width="1.6"/></svg>
<div class="a" style="left:1032px;top:827px;width:12px;height:12px;background:#f6f6f6;border:1px solid #e2e2e4;border-radius:2px"></div>
<div class="a" style="left:1080px;top:827px;width:12px;height:12px;background:#f6f6f6;border:1px solid #e2e2e4;border-radius:2px"></div>
<div class="t" style="left:1117.00px;top:827.53px;font-size:12.7px;color:#212121;letter-spacing:-0.942px;">On</div>
<div class="t" style="left:1251.44px;top:827.53px;font-size:12.7px;color:#212121;">1</div>
<div class="a" style="left:1291px;top:827px;width:12px;height:12px;background:#fff;border:1px solid #6b6b6b;border-radius:2px"></div>
<div class="a" style="left:1321px;top:618px;width:18px;height:228px;background:#fafafa"></div>
<svg class="a" style="left:1326px;top:622px" width="11" height="8" viewBox="0 0 11 8" fill="none"><path d="M5.5 1L10.5 7.5H0.5z" fill="#8a8a8a"/></svg>
<div class="a" style="left:1327px;top:636px;width:9px;height:84px;background:#8c8c8c;border-radius:5px"></div>
<svg class="a" style="left:1314px;top:522px" width="16" height="17" viewBox="0 0 16 17" fill="none"><path d="M1.5 15.5l5-5M4 7.5l5.5 5.5M5.5 9L9.5 2.5l5 5L8 11.5" stroke="#00818e" stroke-width="1.2" stroke-linejoin="round"/><circle cx="12" cy="12.5" r="2.5" stroke="#00818e" stroke-width="1.1"/></svg>
<svg class="a" style="left:105px;top:146px" width="16" height="15" viewBox="0 0 16 15" fill="none"><rect x="2.5" y="4" width="12" height="10.3" stroke="#07818d" stroke-width="1.2"/><circle cx="4.8" cy="4.8" r="4.2" fill="#07818d"/><path d="M3 4.2h3.6M3 5.6h3.6M4.8 2.2v1M4.8 6.4v1" stroke="#fff" stroke-width="0.8"/><path d="M8 9.5l2.3 2.5 4-5.5" stroke="#07818d" stroke-width="1.8"/></svg>
<svg class="a" style="left:193px;top:147px" width="14" height="16" viewBox="0 0 14 16" fill="none"><path d="M11.5 4.5A5.3 5.3 0 0 0 2 8" stroke="#07818d" stroke-width="2.4"/><path d="M2.5 11.5A5.3 5.3 0 0 0 12 8" stroke="#07818d" stroke-width="2.4"/><path d="M9 5.5h4.5V1z" fill="#07818d"/><path d="M5 10.5H.5V15z" fill="#07818d"/></svg>
<svg class="a" style="left:328px;top:146px" width="15" height="16" viewBox="0 0 15 16" fill="none"><path d="M0.8 1h10.8L7.5 6.2V10H4.8V6.2z" fill="#07818d"/><path d="M14 6.5l-6 7" stroke="#07818d" stroke-width="2.6" stroke-linecap="round"/><path d="M6.3 14.8l1.5-1" stroke="#07818d" stroke-width="1.4"/><path d="M1 15h1M3 15h1M5 15h1" stroke="#07818d" stroke-width="1"/></svg>
<svg class="a" style="left:429px;top:146px" width="17" height="17" viewBox="0 0 17 17" fill="none"><rect x="1.6" y="1.6" width="12" height="12.4" stroke="#07818d" stroke-width="1.3"/><path d="M4 4h2M7 4h3M4 6.5h6M4 9h2M7 9h1.5M4 11.5h2" stroke="#07818d" stroke-width="1.1"/><path d="M8.5 7.5l7 5.5-2.5 .5 2 3-1.5 .8-2-3L9.5 16z" fill="#07818d"/></svg>
<svg class="a" style="left:579px;top:146px" width="14" height="17" viewBox="0 0 14 17" fill="none"><path d="M1 15.5c2 .5 2.5-.5 3-3l1.8-8.5c.5-2.3 1.5-3 3.5-2.5M3.5 6.5H8" stroke="#07818d" stroke-width="1.3"/><circle cx="9.5" cy="12.5" r="3" fill="#07818d"/><path d="M8 12.5h3M9.5 11v3" stroke="#fff" stroke-width="0.9"/></svg>
<svg class="a" style="left:716px;top:146px" width="15" height="16" viewBox="0 0 15 16" fill="none"><text x="0.2" y="7" font-size="7.3" font-weight="bold" fill="#5b8fd6" font-family="Liberation Sans">A</text><text x="0.5" y="14.8" font-size="7.3" font-weight="bold" fill="#9b6fcf" font-family="Liberation Sans">Z</text><path d="M11 1v13.5M8 11.5l3 3 3-3" stroke="#555" stroke-width="1.1"/></svg>
<svg class="a" style="left:793px;top:147px" width="15" height="14" viewBox="0 0 15 14" fill="none"><rect x="1.6" y="1.6" width="12" height="10.6" stroke="#07818d" stroke-width="1.3"/><path d="M4.3 4v6M6.5 4v6M8.7 4v6M10.9 4v6" stroke="#07818d" stroke-width="1.4"/></svg>
<svg class="a" style="left:922px;top:146px" width="14" height="17" viewBox="0 0 14 17" fill="none"><rect x="1.6" y="1.6" width="11" height="13.8" stroke="#07818d" stroke-width="1.3"/><circle cx="7" cy="6.3" r="3.5" fill="#07818d"/><path d="M7 10v2" stroke="#07818d" stroke-width="1.2"/><path d="M3.5 14l1.5-1.5M8.5 13h2" stroke="#07818d" stroke-width="1.1"/><path d="M6.2 5.3a.9.9 0 1 1 1.3.8" stroke="#fff" stroke-width="0.8"/></svg>
<svg class="a" style="left:109px;top:506px" width="12" height="14" viewBox="0 0 12 14" fill="none"><path d="M2 6.3L6 2.3l4 4M6 3v10" stroke="#a9a9a9" stroke-width="2.6" stroke-linecap="round" stroke-linejoin="round"/></svg>
<svg class="a" style="left:109px;top:540px" width="12" height="14" viewBox="0 0 12 14" fill="none"><path d="M2 7.7L6 11.7l4-4M6 11V1" stroke="#a9a9a9" stroke-width="2.6" stroke-linecap="round" stroke-linejoin="round"/></svg>
<svg class="a" style="left:219px;top:505px" width="12" height="15" viewBox="0 0 12 15" fill="none"><path d="M0.8 3h4.4M3 0.8v4.4" stroke="#07818d" stroke-width="1.3"/><path d="M6 3.2h4.5L8 7h2.5L3.5 14l2.3-5.3H3.8z" fill="#07818d"/></svg>
<svg class="a" style="left:215px;top:541px" width="16" height="12" viewBox="0 0 16 12" fill="none"><path d="M1.5 1.5h3v9h-3" stroke="#bdbdbd" stroke-width="1" stroke-dasharray="1.5 1"/><path d="M1 5h5l2 1-2 1H1z" fill="#a5a5a5"/><path d="M7.5 1.5l7.5 9M15 1.5l-7.5 9" stroke="#a9a9a9" stroke-width="1.2"/></svg>
<svg class="a" style="left:409px;top:508px" width="16" height="11" viewBox="0 0 16 11" fill="none"><rect x="1" y="1" width="5" height="4" stroke="#a9a9a9" stroke-width="1"/><rect x="9.5" y="4.5" width="5" height="5" stroke="#a9a9a9" stroke-width="1"/><path d="M6 3h2.5l1 2.5M2.5 3h2M11 7h2" stroke="#a9a9a9" stroke-width="1"/></svg>
<svg class="a" style="left:543px;top:506px" width="15" height="14" viewBox="0 0 15 14" fill="none"><path d="M1 1h5l1.5 1.5V4M1 1v10h4" stroke="#a9a9a9" stroke-width="1"/><path d="M2.3 4h2M2.3 6h2M2.3 8h2" stroke="#a9a9a9" stroke-width="0.8"/><path d="M5.5 4.5h5l3 3v5.5h-8z" stroke="#a9a9a9" stroke-width="1"/><path d="M7 8h5M7 10h5M7 12h5" stroke="#a9a9a9" stroke-width="0.8"/></svg>
<svg class="a" style="left:412px;top:541px" width="10" height="12" viewBox="0 0 10 12" fill="none"><path d="M4.5 1h4.5L6 5h3l-6.5 6.5 2-4.5H2z" fill="#a9a9a9"/></svg>
<svg class="a" style="left:543px;top:540px" width="15" height="13" viewBox="0 0 15 13" fill="none"><rect x="1.5" y="1.5" width="12" height="10" stroke="#a9a9a9" stroke-width="1"/><path d="M4 3.5v6M6 3.5v6M8.5 3.5v6M10.8 3.5v6" stroke="#a9a9a9" stroke-width="1.3"/></svg>
<svg class="a" style="left:731px;top:506px" width="15" height="14" viewBox="0 0 15 14" fill="none"><path d="M0.8 1h13.4L9 6.5v6H6v-6z" fill="#07818d"/></svg>
<svg class="a" style="left:732px;top:539px" width="15" height="15" viewBox="0 0 15 15" fill="none"><rect x="1.6" y="3.2" width="12" height="10.6" stroke="#07818d" stroke-width="1.3"/><path d="M6 3h8" stroke="#07818d" stroke-width="2.2"/><rect x="6" y="5.5" width="6" height="2.5" stroke="#07818d" stroke-width="1.1"/><rect x="6" y="9.5" width="6" height="2.5" fill="#07818d"/><path d="M3 10h1.5" stroke="#07818d" stroke-width="1.2"/><path d="M3 1h4L4.5 4h2.5L2.5 9l1.5-4H1.5z" fill="#07818d"/></svg>
<div class="a" style="left:1453px;top:0px;width:404px;height:31px;background:#3b4aae"></div>
<div class="a" style="left:1453px;top:31px;width:404px;height:124px;background:#1e2030"></div>
<div class="a" style="left:1453px;top:155px;width:404px;height:640px;background:#e8e8e8"></div>
<div class="a" style="left:1453px;top:795px;width:404px;height:51px;background:#000"></div>
<div class="a" style="left:1452px;top:0px;width:1px;height:846px;background:#707070"></div>
<div class="a" style="left:1453px;top:0px;width:1px;height:846px;background:#3d4a66"></div>
<div class="t" style="left:1485.40px;top:3.32px;font-size:13.8px;color:#e6e8f5;font-weight:bold;letter-spacing:-0.714px;">TC53</div>
<svg class="a" style="left:1544px;top:5px" width="14" height="12" viewBox="0 0 14 12" fill="none"><path d="M1 3h3l1.5-2h3L10 3h3v8H1z" fill="#c5cbe8"/><circle cx="7" cy="7" r="2" fill="#3b4aae"/></svg>
<svg class="a" style="left:1563px;top:6px" width="14" height="10" viewBox="0 0 14 10" fill="none"><path d="M1 1h8.5v8H1z M10 4l3.5-2.5v7L10 6z" fill="#c5cbe8"/></svg>
<svg class="a" style="left:1584px;top:5px" width="13" height="12" viewBox="0 0 13 12" fill="none"><path d="M1.5 10V6.5a5 5 0 0 1 10 0V10" stroke="#c5cbe8" stroke-width="1.8"/><rect x="0.5" y="7" width="3" height="4.5" rx="1" fill="#c5cbe8"/><rect x="9.5" y="7" width="3" height="4.5" rx="1" fill="#c5cbe8"/></svg>
<svg class="a" style="left:1604px;top:5px" width="12" height="12" viewBox="0 0 12 12" fill="none"><path d="M1 4V1h3M8 1h3v3M11 8v3H8M4 11H1V8" stroke="#c5cbe8" stroke-width="1.6"/></svg>
<svg class="a" style="left:1631px;top:4px" width="14" height="14" viewBox="0 0 14 14" fill="none"><circle cx="7" cy="7" r="3.8" stroke="#c5cbe8" stroke-width="2.6"/><path d="M7 0.5v3M7 10.5v3M0.5 7h3M10.5 7h3M2.4 2.4l2.1 2.1M9.5 9.5l2.1 2.1M2.4 11.6l2.1-2.1M9.5 4.5l2.1-2.1" stroke="#c5cbe8" stroke-width="2.2"/></svg>
<svg class="a" style="left:1790px;top:5px" width="64" height="16" viewBox="0 0 64 16" fill="none"><path d="M3 11.5h11" stroke="#e8e8f0" stroke-width="1.2"/><rect x="26" y="2.5" width="11" height="10.5" stroke="#e8e8f0" stroke-width="1.2"/><path d="M50 2l11 11M61 2L50 13" stroke="#e8e8f0" stroke-width="1.2"/></svg>
<div class="t" style="left:1462.50px;top:51.08px;font-size:15.5px;color:#ffffff;letter-spacing:0.130px;">4:13 PM</div>
<svg class="a" style="left:1534px;top:51px" width="15" height="15" viewBox="0 0 15 15" fill="none"><circle cx="7.5" cy="7.5" r="7" fill="#fff"/><rect x="4" y="3.5" width="3" height="8" rx="1.5" fill="#1e2030"/><circle cx="9.5" cy="4.5" r="1.3" fill="#1e2030"/></svg>
<svg class="a" style="left:1788px;top:52px" width="18" height="13" viewBox="0 0 18 13" fill="none"><rect x="5.3" y="0.8" width="6.6" height="10.8" rx="1.2" stroke="#fff" stroke-width="1.5"/><path d="M1 3.5v5M3 2.5v7M14.3 2.5v7M16.3 3.5v5" stroke="#fff" stroke-width="1.2"/></svg>
<svg class="a" style="left:1812px;top:50px" width="30" height="16" viewBox="0 0 30 16" fill="none"><path d="M2 6L4 2.5 6 6z" fill="#fff"/><path d="M7 5.5Q15 -1 24 5.5L15.5 15z" fill="#fff"/><text x="19" y="15" font-size="7" fill="#fff" font-family="Liberation Sans">6</text></svg>
<svg class="a" style="left:1844px;top:50.5px" width="10" height="15" viewBox="0 0 10 15" fill="none"><rect x="0.5" y="2" width="9" height="14" rx="1" fill="#fff"/><rect x="3" y="0" width="4" height="3" fill="#fff"/><path d="M5.5 4.5L3 9.5h2l-.5 4 2.5-5h-2z" fill="#1e2030"/></svg>
<div class="t" style="left:1557.00px;top:108.78px;font-size:25.3px;color:#ffffff;letter-spacing:-0.071px;">User Settings</div>
<svg class="a" style="left:1800px;top:105px" width="38" height="31" viewBox="0 0 38 31" fill="none"><path d="M1.5 7V1.5H6M32 1.5h4.5V7M36.5 24v5.5H32M6 29.5H1.5V24" stroke="#fff" stroke-width="2.2"/><path d="M9 6v12M13 6v12M17 6v12M21 6v12M25 6v12M29 6v12" stroke="#fff" stroke-width="2"/><path d="M9 22v2M13 22v2M17 22v2M21 22v2M25 22v2M29 22v2" stroke="#fff" stroke-width="2"/></svg>
<div class="t" style="left:1470.40px;top:174.67px;font-size:16.1px;color:#4a4f59;letter-spacing:0.279px;-webkit-text-stroke:0.45px #4a4f59;">Default Location Code</div>
<div class="a" style="left:1475px;top:225px;width:330px;height:1.2px;background:#5c5c5c"></div>
<div class="t" style="left:1470.40px;top:244.07px;font-size:16.1px;color:#4a4f59;letter-spacing:0.243px;-webkit-text-stroke:0.45px #4a4f59;">Journal Template Name</div>
<div class="a" style="left:1475px;top:294px;width:359px;height:1.2px;background:#5c5c5c"></div>
<div class="t" style="left:1470.40px;top:313.47px;font-size:16.1px;color:#4a4f59;letter-spacing:0.178px;-webkit-text-stroke:0.45px #4a4f59;">Journal Batch Name</div>
<div class="a" style="left:1475px;top:364px;width:359px;height:1.2px;background:#5c5c5c"></div>
<div class="t" style="left:1470.40px;top:382.87px;font-size:16.1px;color:#4a4f59;letter-spacing:0.392px;-webkit-text-stroke:0.45px #4a4f59;">Default Printer</div>
<div class="t" style="left:1475.00px;top:415.31px;font-size:14.4px;color:#4a4f59;letter-spacing:-0.101px;transform:scaleY(1.14);transform-origin:0 12.19px;">OFFICEPRINTER</div>
<div class="a" style="left:1475px;top:433px;width:359px;height:1.2px;background:#5c5c5c"></div>
<div class="t" style="left:1470.40px;top:452.27px;font-size:16.1px;color:#4a4f59;letter-spacing:0.317px;-webkit-text-stroke:0.45px #4a4f59;">Default Label Printer</div>
<div class="t" style="left:1475.00px;top:484.71px;font-size:14.4px;color:#4a4f59;letter-spacing:0.023px;transform:scaleY(1.14);transform-origin:0 12.19px;">ZEBRA_BL_PRINTER</div>
<div class="a" style="left:1475px;top:503px;width:359px;height:1.2px;background:#5c5c5c"></div>
<div class="t" style="left:1470.40px;top:521.67px;font-size:16.1px;color:#4a4f59;letter-spacing:0.296px;-webkit-text-stroke:0.45px #4a4f59;">Positive Adjustment Template Name</div>
<div class="t" style="left:1475.00px;top:554.11px;font-size:14.4px;color:#4a4f59;letter-spacing:0.199px;transform:scaleY(1.14);transform-origin:0 12.19px;">ITEM</div>
<div class="a" style="left:1475px;top:572px;width:359px;height:1.2px;background:#5c5c5c"></div>
<div class="t" style="left:1470.40px;top:591.07px;font-size:16.1px;color:#4a4f59;letter-spacing:0.267px;-webkit-text-stroke:0.45px #4a4f59;">Positive Adjustment Batch Name</div>
<div class="t" style="left:1475.00px;top:623.51px;font-size:14.4px;color:#4a4f59;letter-spacing:0.042px;transform:scaleY(1.14);transform-origin:0 12.19px;">DEFAULT</div>
<div class="a" style="left:1475px;top:641px;width:359px;height:1.2px;background:#5c5c5c"></div>
<div class="t" style="left:1470.40px;top:660.47px;font-size:16.1px;color:#4a4f59;letter-spacing:0.366px;-webkit-text-stroke:0.45px #4a4f59;">Negative Adjustment Template Name</div>
<div class="t" style="left:1475.00px;top:692.91px;font-size:14.4px;color:#4a4f59;letter-spacing:0.199px;transform:scaleY(1.14);transform-origin:0 12.19px;">ITEM</div>
<div class="a" style="left:1475px;top:711px;width:359px;height:1.2px;background:#5c5c5c"></div>
<div class="t" style="left:1470.40px;top:729.87px;font-size:16.1px;color:#4a4f59;letter-spacing:0.351px;-webkit-text-stroke:0.45px #4a4f59;">Negative Adjustment Batch Name</div>
<div class="t" style="left:1475.00px;top:762.31px;font-size:14.4px;color:#4a4f59;letter-spacing:0.042px;transform:scaleY(1.14);transform-origin:0 12.19px;">DEFAULT</div>
<div class="a" style="left:1475px;top:780px;width:359px;height:1.2px;background:#5c5c5c"></div>
<div class="a" style="left:1840px;top:162px;width:4.5px;height:306px;background:#acacac"></div>
<svg class="a" style="left:1815px;top:198px" width="31" height="31" viewBox="0 0 31 31" fill="none"><path d="M22.5 5.5V4.5a2 2 0 0 0-2-2H9L2.5 9v17.5a2 2 0 0 0 2 2h16a2 2 0 0 0 2-2V23" stroke="#111" stroke-width="1.7" fill="none"/><path d="M9 2.5V9H2.5" stroke="#111" stroke-width="1.5" fill="none"/><path d="M12 20.5C13 15 17 12.5 22.5 12.5V9l7.5 6.2-7.5 6v-3.2C18 18 15 18.5 12 20.5z" fill="#111"/></svg>
<svg class="a" style="left:1545px;top:812px" width="18" height="19" viewBox="0 0 18 19" fill="none"><path d="M17 1v17L1 9.5z" fill="#9c9c9c"/></svg>
<div class="a" style="left:1649px;top:813px;width:17px;height:17px;background:#9c9c9c;border-radius:50%"></div>
<div class="a" style="left:1751px;top:813px;width:17px;height:17px;background:#9c9c9c;border-radius:2px"></div>
</body></html>
